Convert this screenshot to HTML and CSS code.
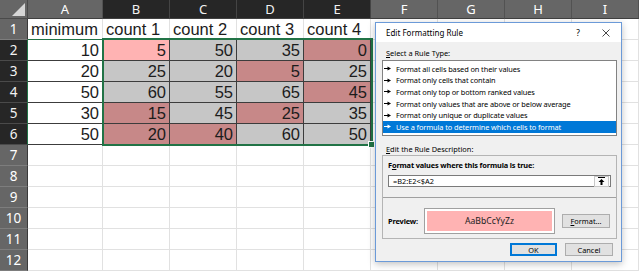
FILE: index.html
```html
<!DOCTYPE html>
<html>
  <head>
    <meta charset="utf-8">
    <title>Edit Formatting Rule</title>
    <link rel="stylesheet" href="styles.css">
  </head>
  <body>
    <div class="sheet">
      <div class="corner"></div>
      <div class="ch">A</div>
      <div class="ch sel">B</div>
      <div class="ch sel">C</div>
      <div class="ch sel">D</div>
      <div class="ch sel">E</div>
      <div class="ch">F</div>
      <div class="ch">G</div>
      <div class="ch">H</div>
      <div class="ch">I</div>

      <div class="rh">1</div>
      <div class="c top">minimum</div>
      <div class="c top">count 1</div>
      <div class="c top">count 2</div>
      <div class="c top">count 3</div>
      <div class="c top">count 4</div>
      <div class="c"></div><div class="c"></div><div class="c"></div><div class="c"></div>

      <div class="rh sel">2</div>
      <div class="c n b">10</div>
      <div class="c n b p">5</div>
      <div class="c n b g">50</div>
      <div class="c n b g">35</div>
      <div class="c n b r">0</div>
      <div class="c"></div><div class="c"></div><div class="c"></div><div class="c"></div>

      <div class="rh sel">3</div>
      <div class="c n b">20</div>
      <div class="c n b g">25</div>
      <div class="c n b g">20</div>
      <div class="c n b r">5</div>
      <div class="c n b g">25</div>
      <div class="c"></div><div class="c"></div><div class="c"></div><div class="c"></div>

      <div class="rh sel">4</div>
      <div class="c n b">50</div>
      <div class="c n b g">60</div>
      <div class="c n b g">55</div>
      <div class="c n b g">65</div>
      <div class="c n b r">45</div>
      <div class="c"></div><div class="c"></div><div class="c"></div><div class="c"></div>

      <div class="rh sel">5</div>
      <div class="c n b">30</div>
      <div class="c n b r">15</div>
      <div class="c n b g">45</div>
      <div class="c n b r">25</div>
      <div class="c n b g">35</div>
      <div class="c"></div><div class="c"></div><div class="c"></div><div class="c"></div>

      <div class="rh sel">6</div>
      <div class="c n b">50</div>
      <div class="c n b r">20</div>
      <div class="c n b r">40</div>
      <div class="c n b g">60</div>
      <div class="c n b g">50</div>
      <div class="c"></div><div class="c"></div><div class="c"></div><div class="c"></div>

      <div class="rh">7</div>
      <div class="c"></div><div class="c"></div><div class="c"></div><div class="c"></div><div class="c"></div><div class="c"></div><div class="c"></div><div class="c"></div><div class="c"></div>
      <div class="rh">8</div>
      <div class="c"></div><div class="c"></div><div class="c"></div><div class="c"></div><div class="c"></div><div class="c"></div><div class="c"></div><div class="c"></div><div class="c"></div>
      <div class="rh">9</div>
      <div class="c"></div><div class="c"></div><div class="c"></div><div class="c"></div><div class="c"></div><div class="c"></div><div class="c"></div><div class="c"></div><div class="c"></div>
      <div class="rh">10</div>
      <div class="c"></div><div class="c"></div><div class="c"></div><div class="c"></div><div class="c"></div><div class="c"></div><div class="c"></div><div class="c"></div><div class="c"></div>
      <div class="rh">11</div>
      <div class="c"></div><div class="c"></div><div class="c"></div><div class="c"></div><div class="c"></div><div class="c"></div><div class="c"></div><div class="c"></div><div class="c"></div>
      <div class="rh">12</div>
      <div class="c"></div><div class="c"></div><div class="c"></div><div class="c"></div><div class="c"></div><div class="c"></div><div class="c"></div><div class="c"></div><div class="c"></div>

      <div class="selection"><span class="handle"></span></div>

      <div class="dialog">
        <div class="titlebar">
          <span class="title">Edit Formatting Rule</span>
          <span class="help">?</span>
          <svg class="close" width="8" height="8" viewBox="0 0 8 8"><path d="M0.5 0.5L7.5 7.5M7.5 0.5L0.5 7.5" stroke="#333" stroke-width="0.9"/></svg>
        </div>
        <div class="body">
          <div class="label"><u>S</u>elect a Rule Type:</div>
          <ul class="rules">
            <li><svg class="arr" width="7" height="5" viewBox="0 0 7 5"><path d="M0 2.5h4" stroke="currentColor"/><path d="M3.5 0.5l3.5 2L3.5 4.5z" fill="currentColor"/></svg>Format all cells based on their values</li>
            <li><svg class="arr" width="7" height="5" viewBox="0 0 7 5"><path d="M0 2.5h4" stroke="currentColor"/><path d="M3.5 0.5l3.5 2L3.5 4.5z" fill="currentColor"/></svg>Format only cells that contain</li>
            <li><svg class="arr" width="7" height="5" viewBox="0 0 7 5"><path d="M0 2.5h4" stroke="currentColor"/><path d="M3.5 0.5l3.5 2L3.5 4.5z" fill="currentColor"/></svg>Format only top or bottom ranked values</li>
            <li><svg class="arr" width="7" height="5" viewBox="0 0 7 5"><path d="M0 2.5h4" stroke="currentColor"/><path d="M3.5 0.5l3.5 2L3.5 4.5z" fill="currentColor"/></svg>Format only values that are above or below average</li>
            <li><svg class="arr" width="7" height="5" viewBox="0 0 7 5"><path d="M0 2.5h4" stroke="currentColor"/><path d="M3.5 0.5l3.5 2L3.5 4.5z" fill="currentColor"/></svg>Format only unique or duplicate values</li>
            <li class="active"><svg class="arr" width="7" height="5" viewBox="0 0 7 5"><path d="M0 2.5h4" stroke="currentColor"/><path d="M3.5 0.5l3.5 2L3.5 4.5z" fill="currentColor"/></svg>Use a formula to determine which cells to format</li>
          </ul>
          <div class="label"><u>E</u>dit the Rule Description:</div>
          <div class="desc">
            <div class="descTop">
              <div class="strong">F<u>o</u>rmat values where this formula is true:</div>
              <div class="formula">
                <span class="expr">=B2:E2&lt;$A2</span>
                <span class="collapse"><svg width="9" height="8" viewBox="0 0 9 8"><path d="M1 0.5h7" stroke="#000"/><path d="M4.5 2L1.5 5h2v3h2V5h2z" fill="#000"/></svg></span>
              </div>
            </div>
            <div class="previewRow">
              <span class="strong previewLabel">Preview:</span>
              <div class="preview"><div class="swatch">AaBbCcYyZz</div></div>
              <span class="btn fmt"><u>F</u>ormat...</span>
            </div>
          </div>
          <div class="actions">
            <span class="btn ok">OK</span>
            <span class="btn">Cancel</span>
          </div>
        </div>
      </div>
    </div>
  </body>
</html>
```

FILE: styles.css
```css
body { margin: 0; background: #fff; overflow: hidden; }

.sheet { position: relative; display: grid; grid-template-columns: 28px 75px repeat(8, 67px); grid-template-rows: 19px repeat(12, 21px); font-family: "Liberation Sans", Arial, sans-serif; font-size: 16.5px; color: #1c1c1c; }

.corner { position: relative; background: #666; border-right: 1px solid #4a4a4a; border-bottom: 1px solid #4a4a4a; }
.corner::after { content: ""; position: absolute; right: 2px; bottom: 2px; width: 0; height: 0; border-left: 13px solid transparent; border-bottom: 13px solid #d6d6d6; }

.ch { display: flex; align-items: center; justify-content: center; background: #666; color: #fff; font: 13px "Noto Sans", sans-serif; border-right: 1px solid #525252; border-bottom: 1px solid #404040; }
.ch.sel { background: #262626; border-right-color: #444; color: #f2f2f2; }

.rh { display: flex; align-items: center; justify-content: center; background: #666; color: #fff; font: 13.5px "Noto Sans", sans-serif; border-bottom: 1px solid #7d7d7d; border-right: 1px solid #3a3a3a; }
.rh.sel { background: #262626; border-bottom-color: #4a4a4a; border-right-color: #217346; color: #f2f2f2; }

.c { border-right: 1px solid #e1e1e1; border-bottom: 1px solid #e1e1e1; padding: 0 3px; line-height: 20px; white-space: nowrap; overflow: hidden; }
.c.top { border-bottom-color: #217346; }
.n { text-align: right; }
.b { border-color: #3c3c3c; }
.g { background: #c6c6c6; }
.r { background: #c78888; }
.p { background: #ffb3b3; }

.selection { position: absolute; left: 102px; top: 38px; width: 271px; height: 108px; box-sizing: border-box; border: 2px solid #217346; pointer-events: none; }
.handle { position: absolute; right: -4px; bottom: -4px; width: 5px; height: 5px; background: #217346; border: 1px solid #fff; }

.dialog { position: absolute; left: 375px; top: 22px; width: 247px; height: 240px; box-sizing: border-box; display: flex; flex-direction: column; background: #f0f0f0; border: 1px solid #6b9ad8; box-shadow: 0 2px 7px rgba(0,0,0,0.25); font-family: "Noto Sans", sans-serif; font-size: 7.4px; color: #000; }
.titlebar { display: flex; align-items: center; height: 19px; padding-left: 10px; background: #fff; }
.title { flex: 1; font-size: 8px; }
.help { font-size: 8.4px; margin-right: 22px; }
.close { margin-right: 11px; }

.body { flex: 1; display: flex; flex-direction: column; padding: 0 4px 0 6px; }
.label { margin: 5px 0 0 4px; line-height: 12px; }
.rules { list-style: none; margin: 1px 0 0; padding: 2px 0 0; height: 76px; box-sizing: border-box; background: #fff; border: 1px solid #828282; }
.rules li { display: flex; align-items: center; gap: 5px; height: 11.6px; padding-left: 1px; white-space: nowrap; letter-spacing: -0.1px; }
.rules li.active { background: #0078d7; color: #fff; }
.rules + .label { margin-top: 7px; }

.desc { height: 84px; box-sizing: border-box; border: 1px solid #b4b4b4; display: flex; flex-direction: column; }
.descTop { height: 42px; box-sizing: border-box; padding: 4px 5px 0; border-bottom: 1px solid #a0a0a0; }
.strong { font-weight: bold; line-height: 11px; letter-spacing: -0.15px; }
.formula { display: flex; align-items: center; justify-content: space-between; height: 12px; margin-top: 4px; box-sizing: border-box; padding: 0 1px 0 4px; background: #fff; border: 1px solid #7a7a7a; }
.collapse { display: flex; align-items: center; justify-content: center; width: 13px; height: 9px; border: 1px solid #c8c8c8; background: #fbfbfb; }

.previewRow { display: flex; align-items: center; padding: 10px 5px 3px; }
.previewLabel { width: 36px; }
.preview { width: 131px; height: 26px; box-sizing: border-box; padding: 2px; background: #fff; border: 1px solid #a0a0a0; }
.swatch { height: 100%; display: flex; align-items: center; justify-content: center; background: #ffb3b3; color: #222; font-size: 8.6px; }
.btn { display: flex; align-items: center; justify-content: center; box-sizing: border-box; height: 14px; background: #e1e1e1; border: 1px solid #adadad; }
.fmt { width: 48px; margin-left: 7px; }

.actions { display: flex; justify-content: flex-end; gap: 8px; margin-top: 4px; padding-right: 4px; }
.actions .btn { width: 48px; height: 13px; }
.actions .ok { width: 47px; border-color: #0078d7; box-shadow: inset 0 0 0 1px #0078d7; }
```
